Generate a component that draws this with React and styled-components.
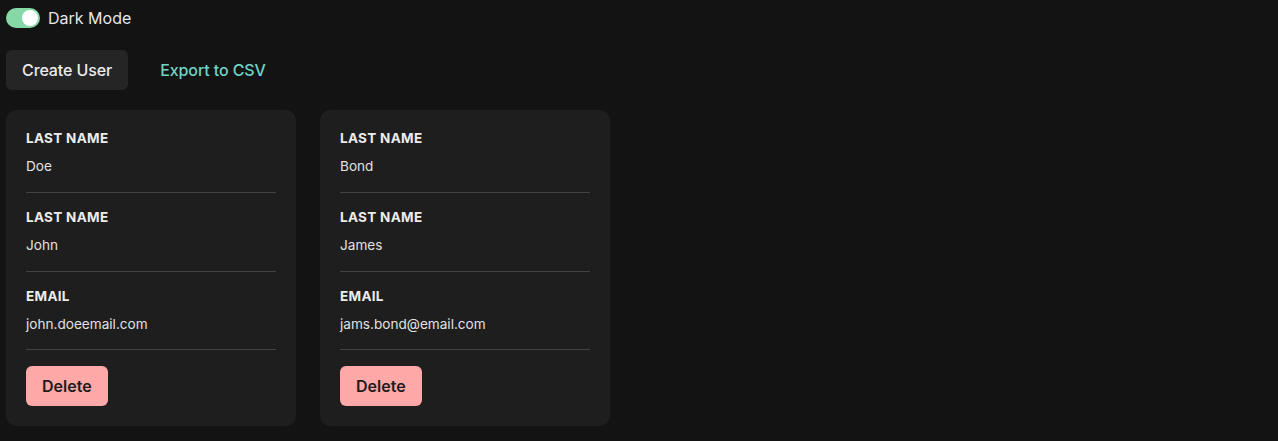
import React, { useState } from "react";
import styled, { createGlobalStyle } from "styled-components";

const GlobalStyle = createGlobalStyle`
  html, body {
    margin: 0;
    background: #131313;
  }
  body {
    font-family: Inter, "Noto Sans", sans-serif;
    color: #e8e8e8;
  }
`;

const Page = styled.div`
  padding: 8px 6px;
  display: flex;
  flex-direction: column;
  gap: 22px;
`;

const ToggleRow = styled.label`
  display: flex;
  align-items: center;
  gap: 8px;
  font-size: 16px;
  line-height: 20px;
  color: #e6e6e6;
  cursor: pointer;
`;

const Track = styled.span`
  position: relative;
  width: 34px;
  height: 20px;
  border-radius: 10px;
  background: ${(p) => (p.$on ? "#86d9a6" : "#555")};
`;

const Knob = styled.span`
  position: absolute;
  top: 2px;
  left: ${(p) => (p.$on ? "16px" : "2px")};
  width: 16px;
  height: 16px;
  border-radius: 50%;
  background: #fff;
`;

const Actions = styled.div`
  display: flex;
  gap: 16px;
`;

const ActionButton = styled.button`
  height: 40px;
  padding: 0 16px;
  border: none;
  border-radius: 6px;
  font-family: inherit;
  font-size: 16px;
  font-weight: 500;
  letter-spacing: -0.1px;
  background: ${(p) => (p.$ghost ? "transparent" : "#252525")};
  color: ${(p) => (p.$ghost ? "#6fd4c4" : "#ececec")};
  cursor: pointer;
`;

const Cards = styled.div`
  display: flex;
  gap: 24px;
  margin-top: -2px;
`;

const Card = styled.div`
  width: 250px;
  padding: 20px;
  background: #1e1e1e;
  border-radius: 10px;
`;

const Field = styled.div`
  padding-bottom: 16px;
  margin-bottom: 16px;
  border-bottom: 1px solid #424242;

  &:last-of-type {
    padding-bottom: 15px;
  }
`;

const Label = styled.div`
  font-size: 13.5px;
  line-height: 16px;
  font-weight: 700;
  letter-spacing: 0.3px;
  color: #ececec;
`;

const Value = styled.div`
  margin-top: 10px;
  font-size: 13.6px;
  line-height: 20px;
  color: #e2e2e2;
`;

const DeleteButton = styled.button`
  height: 40px;
  padding: 0 16px;
  border: none;
  border-radius: 6px;
  background: #ffa8a8;
  color: #1c1c1c;
  font-family: inherit;
  font-size: 16px;
  font-weight: 600;
  cursor: pointer;
`;

const users = [
  { last: "Doe", first: "John", email: "john.doeemail.com" },
  { last: "Bond", first: "James", email: "jams.bond@email.com" },
];

const App = () => {
  const [dark, setDark] = useState(true);

  return (
    <>
      <GlobalStyle />
      <Page>
        <ToggleRow onClick={() => setDark(!dark)}>
          <Track $on={dark}>
            <Knob $on={dark} />
          </Track>
          Dark Mode
        </ToggleRow>

        <Actions>
          <ActionButton>Create User</ActionButton>
          <ActionButton $ghost>Export to CSV</ActionButton>
        </Actions>

        <Cards>
          {users.map((u) => (
            <Card key={u.email}>
              <Field>
                <Label>LAST NAME</Label>
                <Value>{u.last}</Value>
              </Field>
              <Field>
                <Label>LAST NAME</Label>
                <Value>{u.first}</Value>
              </Field>
              <Field>
                <Label>EMAIL</Label>
                <Value>{u.email}</Value>
              </Field>
              <DeleteButton>Delete</DeleteButton>
            </Card>
          ))}
        </Cards>
      </Page>
    </>
  );
};

export default App;
